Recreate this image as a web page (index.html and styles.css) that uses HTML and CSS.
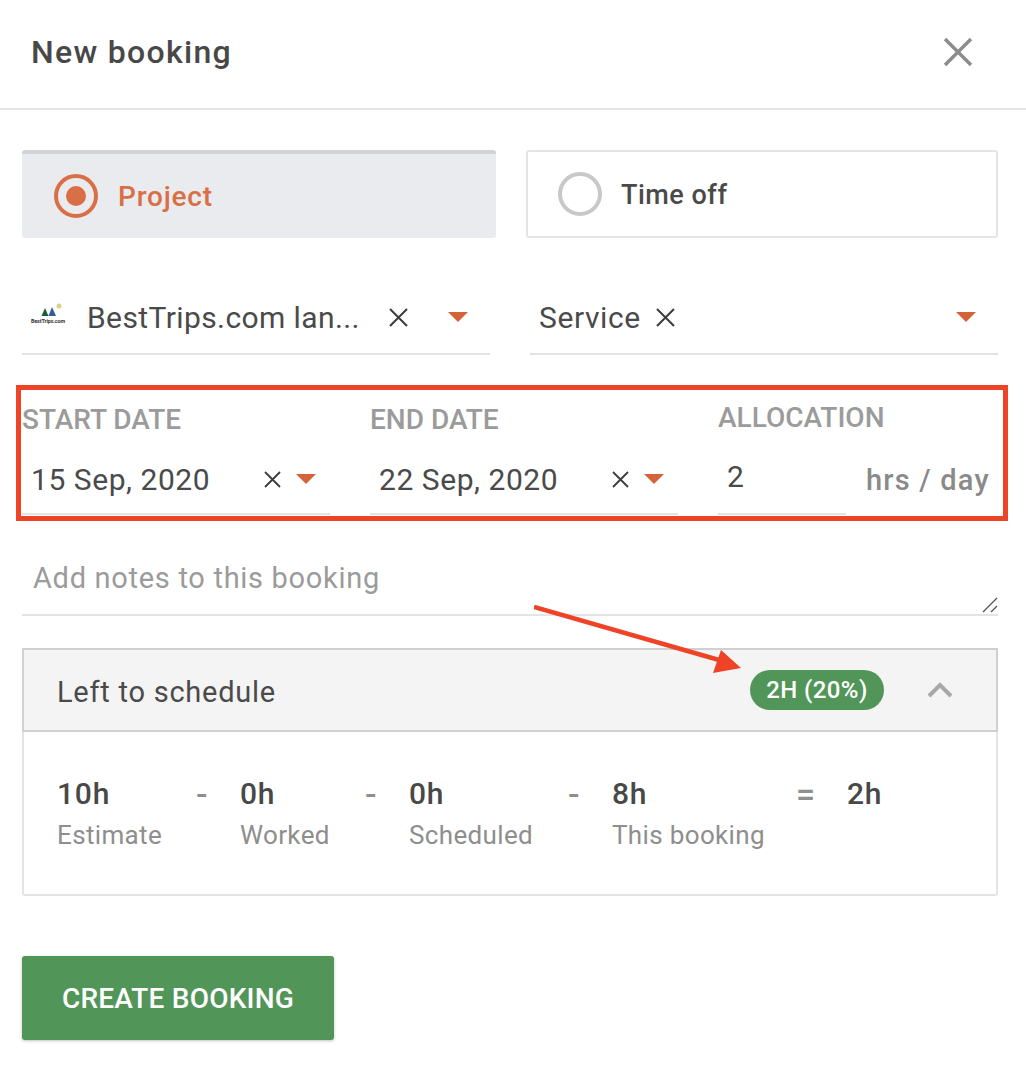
FILE: index.html
```html
<!DOCTYPE html>
<html lang="en">
<head>
<meta charset="utf-8">
<title>New booking</title>
<link rel="stylesheet" href="styles.css">
</head>
<body>
<div class="page">
  <header class="header">
    <h1 class="title">New booking</h1>
    <svg class="close" width="30" height="30" viewBox="0 0 30 30"><path d="M2 2 L28 28 M28 2 L2 28" stroke="#8c8c8c" stroke-width="3.4" fill="none"/></svg>
  </header>
  <main class="content">
    <div class="types">
      <div class="type type-on">
        <span class="radio radio-on"><span class="radio-dot"></span></span>
        <span class="type-label">Project</span>
      </div>
      <div class="type type-off">
        <span class="radio"></span>
        <span class="type-label">Time off</span>
      </div>
    </div>
    <div class="selects">
      <div class="select select-project">
        <svg class="logo" width="40" height="40" viewBox="0 0 40 40">
          <path d="M17 11 L20.5 19 L13.5 19 Z" fill="#1f5d2c"/>
          <path d="M24 10 L28 19 L20.5 19 Z" fill="#2d5f96"/>
          <circle cx="31" cy="9" r="2.5" fill="#d8d28a"/>
          <text class="logo-text" x="20" y="26" text-anchor="middle">BestTrips.com</text>
        </svg>
        <span class="select-text select-text-project">BestTrips.com lan...</span>
        <svg class="x" width="19" height="19" viewBox="0 0 19 19"><path d="M1 1 L18 18 M18 1 L1 18" stroke="#3c3c3c" stroke-width="2" fill="none"/></svg>
        <span class="caret caret-project"></span>
      </div>
      <div class="select select-service">
        <span class="select-text select-text-service">Service</span>
        <svg class="x" width="19" height="19" viewBox="0 0 19 19"><path d="M1 1 L18 18 M18 1 L1 18" stroke="#3c3c3c" stroke-width="2" fill="none"/></svg>
        <span class="caret caret-service"></span>
      </div>
    </div>
    <div class="dates">
      <div class="field field-date">
        <div class="label">START DATE</div>
        <div class="control">
          <span class="value">15 Sep, 2020</span>
          <svg class="x-small" width="17" height="17" viewBox="0 0 17 17"><path d="M1 1 L16 16 M16 1 L1 16" stroke="#3c3c3c" stroke-width="1.8" fill="none"/></svg>
          <span class="caret"></span>
        </div>
      </div>
      <div class="field field-date">
        <div class="label">END DATE</div>
        <div class="control">
          <span class="value">22 Sep, 2020</span>
          <svg class="x-small" width="17" height="17" viewBox="0 0 17 17"><path d="M1 1 L16 16 M16 1 L1 16" stroke="#3c3c3c" stroke-width="1.8" fill="none"/></svg>
          <span class="caret"></span>
        </div>
      </div>
      <div class="field field-alloc">
        <div class="label label-alloc">ALLOCATION</div>
        <div class="control control-alloc"><span class="value">2</span></div>
      </div>
      <span class="suffix">hrs / day</span>
    </div>
    <div class="notes">
      <span class="notes-text">Add notes to this booking</span>
      <svg class="resize" width="16" height="16" viewBox="0 0 16 16"><path d="M1 15 L15 1 M9 15 L15 9" stroke="#555" stroke-width="1.3" fill="none"/></svg>
    </div>
    <section class="panel">
      <div class="panel-head">
        <span class="panel-title">Left to schedule</span>
        <span class="pill">2H (20%)</span>
        <svg class="chevron" width="26" height="16" viewBox="0 0 26 16"><path d="M2 14 L13 3 L24 14" stroke="#a8a8a8" stroke-width="4" fill="none"/></svg>
      </div>
      <div class="calc">
        <div class="calc-item c1"><b>10h</b><small>Estimate</small></div>
        <span class="op o1">-</span>
        <div class="calc-item c2"><b>0h</b><small>Worked</small></div>
        <span class="op o2">-</span>
        <div class="calc-item c3"><b>0h</b><small>Scheduled</small></div>
        <span class="op o3">-</span>
        <div class="calc-item c4"><b>8h</b><small>This booking</small></div>
        <span class="op o4">=</span>
        <div class="calc-item c5"><b>2h</b></div>
      </div>
    </section>
    <button class="submit" type="button">CREATE BOOKING</button>
  </main>
  <div class="highlight"></div>
  <svg class="arrow" width="220" height="90" viewBox="0 0 220 90">
    <path d="M0 3 L192 58" stroke="#ee4326" stroke-width="4.5" fill="none"/>
    <path d="M207 64 L187 46 L179 69 Z" fill="#ee4326"/>
  </svg>
</div>
</body>
</html>
```
FILE: styles.css
```css
* { box-sizing: border-box; }
html, body { margin: 0; padding: 0; background: #fff; }
body { font-family: Roboto, "Liberation Sans", sans-serif; color: #4a4a4a; }
.page { position: relative; width: 1026px; height: 1070px; overflow: hidden; }
.header { height: 110px; border-bottom: 2px solid #e4e4e4; display: flex; align-items: center; justify-content: space-between; padding: 0 53px 4px 31px; }
.title { margin: 0; font-size: 32px; font-weight: 500; letter-spacing: 1.3px; color: #484848; }
.content { padding: 40px 28px 0 22px; }
.types { display: flex; gap: 30px; height: 88px; }
.type { display: flex; align-items: center; border-radius: 3px; font-size: 28px; font-weight: 500; letter-spacing: 0.8px; }
.type-on { width: 474px; flex: none; background: #e9ebee; border-top: 4px solid #d1d3d8; color: #d96f46; padding-left: 32px; }
.type-off { flex: 1; border: 2px solid #e4e4e4; padding-left: 30px; color: #4a4a4a; font-size: 27px; letter-spacing: 0.5px; }
.type-off .type-label { margin-top: 2px; margin-left: -1px; }
.radio { width: 44px; height: 44px; border-radius: 50%; border: 4px solid #c8c8c8; display: flex; align-items: center; justify-content: center; margin-right: 20px; }
.radio-on { border-color: #d96f46; }
.radio-dot { width: 20px; height: 20px; border-radius: 50%; background: #d96f46; }
.selects { display: flex; justify-content: space-between; margin-top: 57px; }
.select { height: 60px; border-bottom: 2px solid #e4e4e4; display: flex; align-items: center; font-size: 30px; letter-spacing: 0.9px; padding-bottom: 14px; }
.select-project { width: 468px; padding-left: 6px; }
.select-service { width: 468px; padding-left: 9px; }
.logo { flex: none; margin-right: 19px; }
.logo-text { font-size: 5.4px; font-weight: 700; fill: #333; letter-spacing: -0.1px; }
.select-text { white-space: nowrap; color: #4a4a4a; }
.select-text-project { letter-spacing: 0.4px; }
.select-text-service { letter-spacing: 0.6px; }
.select-project .x { margin-left: 29px; }
.select-service .x { margin-left: 15px; }
.caret { display: inline-block; width: 0; height: 0; border-left: 10px solid transparent; border-right: 10px solid transparent; border-top: 10px solid #d4633a; }
.caret-project { margin-left: 40px; }
.caret-service { margin-left: auto; margin-right: 22px; }
.dates { display: flex; margin-top: 30px; height: 136px; padding-top: 16px; }
.field-date { width: 308px; margin-right: 40px; }
.field-alloc { width: 128px; }
.label { font-size: 28px; font-weight: 500; color: #9b9b9b; height: 38px; line-height: 38px; white-space: nowrap; }
.label-alloc { margin-top: -2px; }
.control { margin-top: 18px; height: 58px; border-bottom: 2px solid #e4e4e4; display: flex; align-items: center; padding-left: 9px; padding-bottom: 12px; }
.control-alloc { height: 60px; padding-bottom: 16px; }
.value { font-size: 30px; letter-spacing: 0.55px; color: #4a4a4a; white-space: nowrap; min-width: 178px; }
.control-alloc .value { min-width: 0; }
.x-small { margin-left: 54px; flex: none; }
.control .caret { margin-left: 15px; }
.suffix { font-size: 29px; font-weight: 500; letter-spacing: 1.2px; color: #8a8a8a; margin-left: 20px; margin-top: 62px; white-space: nowrap; }
.notes { position: relative; height: 73px; margin-top: 22px; border-bottom: 2px solid #e4e4e4; padding-left: 11px; padding-top: 18px; font-size: 29px; letter-spacing: 0.7px; color: #9b9b9b; }
.resize { position: absolute; right: 0; bottom: 1px; }
.panel { margin-top: 32px; height: 248px; border: 2px solid #e4e4e4; border-radius: 3px; }
.panel-head { height: 84px; margin: -2px -2px 0; background: #f4f4f4; border: 2px solid #d0d0d0; display: flex; align-items: center; padding-left: 33px; }
.panel-title { font-size: 29px; letter-spacing: 0.75px; color: #4a4a4a; margin-top: 4px; }
.pill { margin-left: auto; width: 134px; height: 40px; border-radius: 20px; background: #519559; color: #fff; font-size: 24px; font-weight: 500; letter-spacing: 0.4px; display: flex; align-items: center; justify-content: center; }
.chevron { margin-left: 43px; margin-right: 43px; }
.calc { position: relative; height: 160px; }
.calc-item { position: absolute; top: 44px; display: flex; flex-direction: column; }
.calc-item b { font-size: 30px; font-weight: 500; letter-spacing: 0.8px; color: #484848; }
.calc-item small { font-size: 26px; letter-spacing: 0.35px; color: #8e8e8e; margin-top: 9px; white-space: nowrap; }
.c1 { left: 33px; } .c2 { left: 216px; } .c3 { left: 385px; } .c4 { left: 588px; } .c5 { left: 823px; }
.op { position: absolute; top: 42px; font-size: 34px; font-weight: 500; color: #8e8e8e; }
.o1 { left: 172px; } .o2 { left: 341px; } .o3 { left: 544px; } .o4 { left: 772px; }
.submit { display: block; margin-top: 60px; width: 312px; height: 84px; border: 0; border-radius: 3px; background: #519559; color: #fff; font-family: inherit; font-size: 28px; font-weight: 500; letter-spacing: 0.2px; box-shadow: 0 1px 3px rgba(0,0,0,.25); }
.highlight { position: absolute; left: 16px; top: 385px; width: 992px; height: 136px; border: 5px solid #ee4326; pointer-events: none; }
.arrow { position: absolute; left: 534px; top: 604px; }
```
